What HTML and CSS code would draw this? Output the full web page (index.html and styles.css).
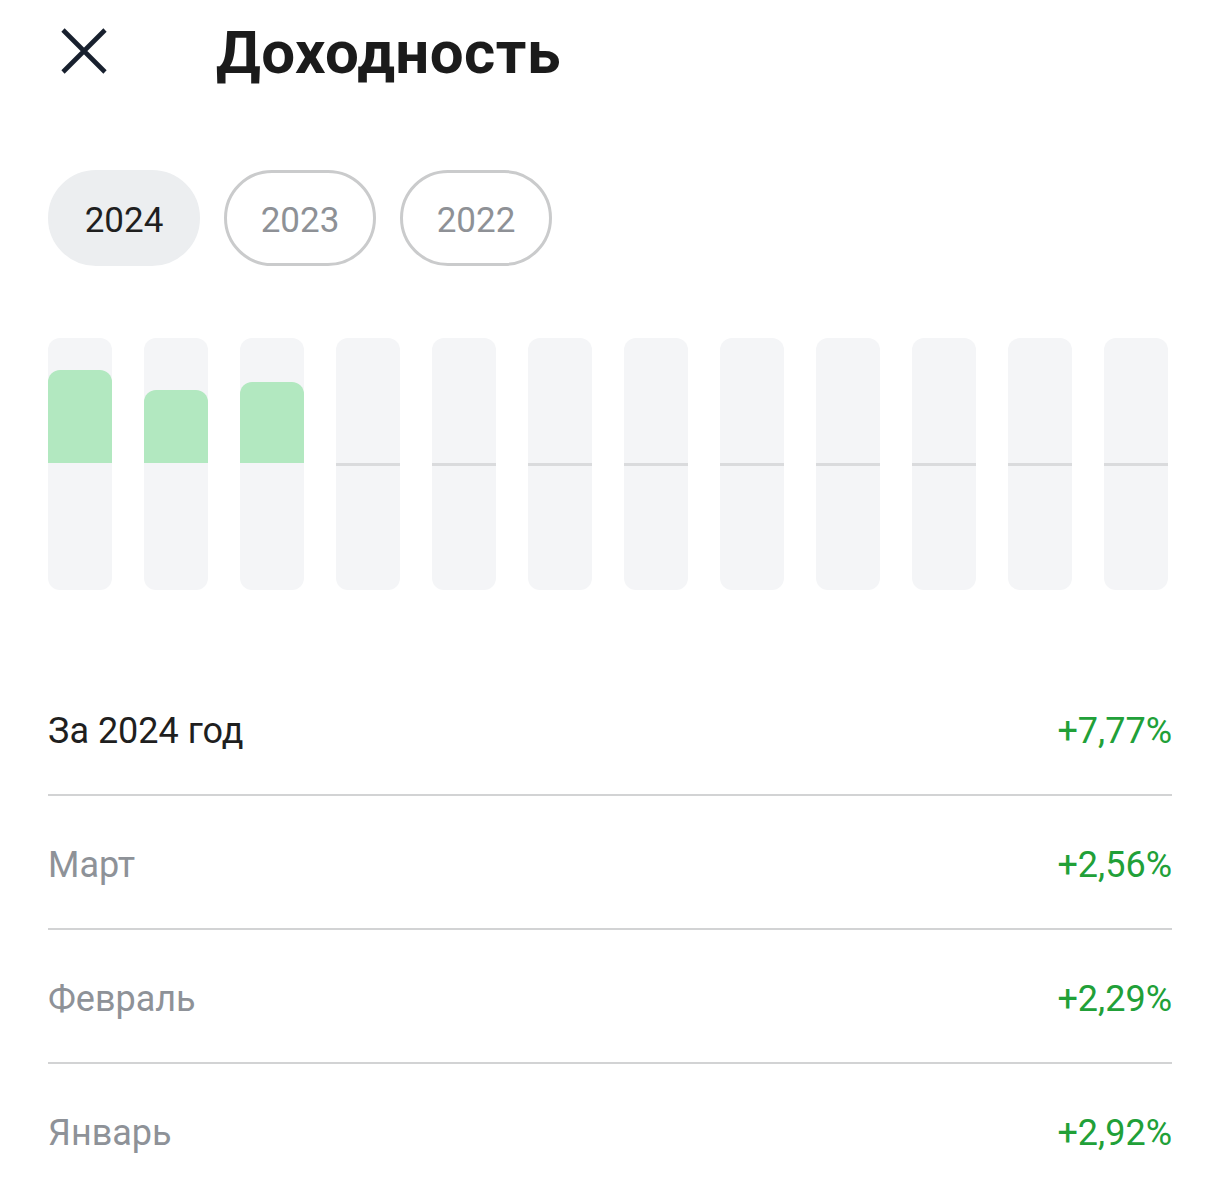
FILE: index.html
```html
<!DOCTYPE html>
<html lang="ru">
<head>
<meta charset="utf-8">
<title>Доходность</title>
<link rel="stylesheet" href="styles.css">
</head>
<body>
<div class="page">
  <header class="header">
    <svg class="close" width="58" height="58" viewBox="0 0 58 58" aria-label="Закрыть">
      <path d="M8 8 L50 50 M50 8 L8 50" stroke="#18202e" stroke-width="4.6" stroke-linecap="butt" fill="none"/>
    </svg>
    <h1 class="title">Доходность</h1>
  </header>

  <div class="pills">
    <div class="pill active">2024</div>
    <div class="pill">2023</div>
    <div class="pill">2022</div>
  </div>

  <div class="chart">
    <div class="col"><div class="top"><div class="fill" style="height:93px"></div></div><div class="bottom"></div></div>
    <div class="col"><div class="top"><div class="fill" style="height:73px"></div></div><div class="bottom"></div></div>
    <div class="col"><div class="top"><div class="fill" style="height:81px"></div></div><div class="bottom"></div></div>
    <div class="col empty"><div class="top"></div><div class="line"></div><div class="bottom"></div></div>
    <div class="col empty"><div class="top"></div><div class="line"></div><div class="bottom"></div></div>
    <div class="col empty"><div class="top"></div><div class="line"></div><div class="bottom"></div></div>
    <div class="col empty"><div class="top"></div><div class="line"></div><div class="bottom"></div></div>
    <div class="col empty"><div class="top"></div><div class="line"></div><div class="bottom"></div></div>
    <div class="col empty"><div class="top"></div><div class="line"></div><div class="bottom"></div></div>
    <div class="col empty"><div class="top"></div><div class="line"></div><div class="bottom"></div></div>
    <div class="col empty"><div class="top"></div><div class="line"></div><div class="bottom"></div></div>
    <div class="col empty"><div class="top"></div><div class="line"></div><div class="bottom"></div></div>
  </div>

  <div class="rows">
    <div class="row"><span class="label total">За 2024 год</span><span class="value">+7,77%</span></div>
    <div class="row"><span class="label">Март</span><span class="value">+2,56%</span></div>
    <div class="row"><span class="label">Февраль</span><span class="value">+2,29%</span></div>
    <div class="row last"><span class="label">Январь</span><span class="value">+2,92%</span></div>
  </div>
</div>
</body>
</html>
```

FILE: styles.css
```css
html, body {
  margin: 0;
  padding: 0;
  background: #ffffff;
}

body {
  font-family: Roboto, "Noto Sans", "Liberation Sans", sans-serif;
  color: #1f1f1f;
}

.page {
  padding: 0 48px;
}

.header {
  display: flex;
  align-items: flex-start;
  padding-top: 18px;
  height: 70px;
}

.close {
  display: block;
  margin-left: 7px;
  margin-top: 4px;
  flex: none;
}

.title {
  margin: 0 0 0 103px;
  font-size: 60px;
  font-weight: 700;
  line-height: 70px;
  color: #1b1b1b;
  letter-spacing: 0.5px;
}

.pills {
  display: flex;
  gap: 24px;
  margin-top: 82px;
}

.pill {
  box-sizing: border-box;
  width: 152px;
  height: 96px;
  padding-top: 4px;
  border-radius: 48px;
  border: 3px solid #cacbcc;
  display: flex;
  align-items: center;
  justify-content: center;
  font-size: 35px;
  color: #8e9196;
}

.pill.active {
  background: #eceef0;
  border-color: #eceef0;
  color: #1f1f1f;
}

.chart {
  display: flex;
  gap: 32px;
  margin-top: 72px;
  height: 252px;
}

.col {
  width: 64px;
  height: 252px;
  background: #f4f5f7;
  border-radius: 12px;
  display: flex;
  flex-direction: column;
  overflow: hidden;
}

.top {
  height: 125px;
  display: flex;
  flex-direction: column;
  justify-content: flex-end;
}

.fill {
  background: #b2e8c0;
  border-radius: 12px 12px 0 0;
}

.line {
  height: 3px;
  background: #dadbdd;
}

.bottom {
  flex: 1;
}

.rows {
  margin-top: 72px;
}

.row {
  height: 126px;
  padding-top: 6px;
  display: flex;
  align-items: center;
  justify-content: space-between;
  border-bottom: 2px solid #d2d3d4;
  font-size: 36px;
}

.row.last {
  border-bottom: none;
}

.label {
  color: #8e9298;
}

.label.total {
  color: #1f1f1f;
}

.value {
  color: #21a038;
}
```
